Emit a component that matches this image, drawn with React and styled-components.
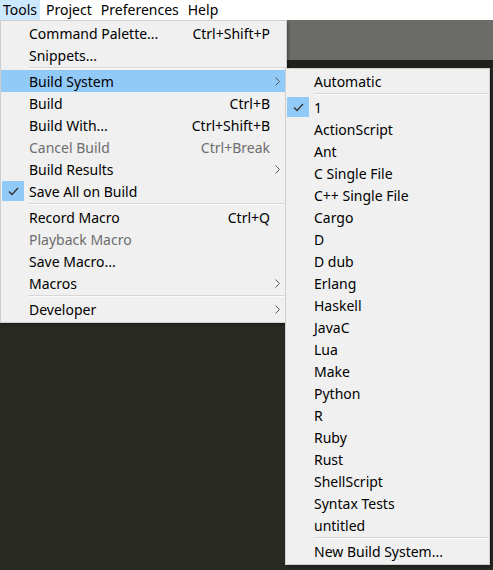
import React from "react";
import styled, { createGlobalStyle } from "styled-components";

const GlobalStyle = createGlobalStyle`
  html, body {
    margin: 0;
    padding: 0;
    height: 100%;
    background: #282923;
    overflow: hidden;
  }
  #root {
    height: 100%;
  }
`;

const toolsItems = [
  { label: "Command Palette...", shortcut: "Ctrl+Shift+P" },
  { label: "Snippets..." },
  { sep: true },
  { label: "Build System", submenu: true, active: true },
  { label: "Build", shortcut: "Ctrl+B" },
  { label: "Build With...", shortcut: "Ctrl+Shift+B" },
  { label: "Cancel Build", shortcut: "Ctrl+Break", disabled: true },
  { label: "Build Results", submenu: true },
  { label: "Save All on Build", checked: true },
  { sep: true },
  { label: "Record Macro", shortcut: "Ctrl+Q" },
  { label: "Playback Macro", disabled: true },
  { label: "Save Macro..." },
  { label: "Macros", submenu: true },
  { sep: true },
  { label: "Developer", submenu: true },
];

const buildSystems = [
  { label: "Automatic" },
  { sep: true },
  { label: "1", checked: true },
  { label: "ActionScript" },
  { label: "Ant" },
  { label: "C Single File" },
  { label: "C++ Single File" },
  { label: "Cargo" },
  { label: "D" },
  { label: "D dub" },
  { label: "Erlang" },
  { label: "Haskell" },
  { label: "JavaC" },
  { label: "Lua" },
  { label: "Make" },
  { label: "Python" },
  { label: "R" },
  { label: "Ruby" },
  { label: "Rust" },
  { label: "ShellScript" },
  { label: "Syntax Tests" },
  { label: "untitled" },
  { sep: true },
  { label: "New Build System..." },
];

const Window = styled.div`
  position: relative;
  height: 100%;
  display: flex;
  flex-direction: column;
  font-family: "Noto Sans", "Open Sans", sans-serif;
  font-size: 14px;
  color: #000;
`;

const MenuBar = styled.div`
  display: flex;
  height: 20px;
  background: #fff;
  align-items: stretch;
`;

const BarItem = styled.div`
  padding: 0 3px 0 3px;
  margin-right: 3px;
  line-height: 20px;
  background: ${(p) => (p.open ? "#cce8ff" : "transparent")};
`;

const TabStrip = styled.div`
  height: 40px;
  background: #6b6c67;
`;

const TabShadow = styled.div`
  height: 8px;
  background: #1f201b;
`;

const Editor = styled.div`
  flex: 1;
  background: #282923;
`;

const Menu = styled.div`
  position: absolute;
  top: ${(p) => p.top}px;
  left: ${(p) => p.left}px;
  width: ${(p) => p.width}px;
  padding: 1px 0 2px;
  background: #f0f0f0;
  border: 1px solid #cfcfcf;
  box-shadow: 2px 2px 2px rgba(0, 0, 0, 0.25);
  box-sizing: border-box;
`;

const Row = styled.div`
  display: grid;
  grid-template-columns: ${(p) => p.indent}px 1fr auto 16px;
  align-items: center;
  height: 22px;
  background: ${(p) => (p.active ? "#91c9f7" : "transparent")};
  color: ${(p) => (p.disabled ? "#6d6d6d" : "#000")};
  white-space: nowrap;
`;

const CheckBox = styled.div`
  width: 22px;
  height: 20px;
  margin-left: 1px;
  display: flex;
  align-items: center;
  justify-content: center;
  background: ${(p) => (p.on ? "#91c9f7" : "transparent")};
`;

const Label = styled.span``;

const Shortcut = styled.span`
  text-align: right;
`;

const Arrow = styled.span`
  display: flex;
  padding-left: 5px;
`;

const Separator = styled.div`
  height: 1px;
  margin: 1px 0 1px ${(p) => p.indent}px;
  background: #d7d7d7;
  border-bottom: 1px solid #fbfbfb;
`;

const Check = () => (
  <svg width="11" height="9" viewBox="0 0 11 9">
    <path d="M1 4.5 L4 7.5 L10 1" fill="none" stroke="#333" strokeWidth="1.3" />
  </svg>
);

const Chevron = () => (
  <svg width="5" height="9" viewBox="0 0 5 9">
    <path d="M0.5 0.5 L4.5 4.5 L0.5 8.5" fill="none" stroke="#555" strokeWidth="1" />
  </svg>
);

const MenuList = ({ items, indent, ...rest }) => (
  <Menu {...rest}>
    {items.map((it, i) =>
      it.sep ? (
        <Separator key={i} indent={indent} />
      ) : (
        <Row key={i} indent={indent} active={it.active} disabled={it.disabled}>
          <CheckBox on={it.checked}>{it.checked && <Check />}</CheckBox>
          <Label>{it.label}</Label>
          <Shortcut>{it.shortcut || ""}</Shortcut>
          <Arrow>{it.submenu && <Chevron />}</Arrow>
        </Row>
      )
    )}
  </Menu>
);

export default function App() {
  return (
    <>
      <GlobalStyle />
      <Window>
        <MenuBar>
          <BarItem open>Tools</BarItem>
          <BarItem>Project</BarItem>
          <BarItem>Preferences</BarItem>
          <BarItem>Help</BarItem>
        </MenuBar>
        <TabStrip />
        <TabShadow />
        <Editor />
        <MenuList items={toolsItems} indent={28} top={20} left={0} width={287} />
        <MenuList items={buildSystems} indent={28} top={68} left={285} width={205} />
      </Window>
    </>
  );
}
